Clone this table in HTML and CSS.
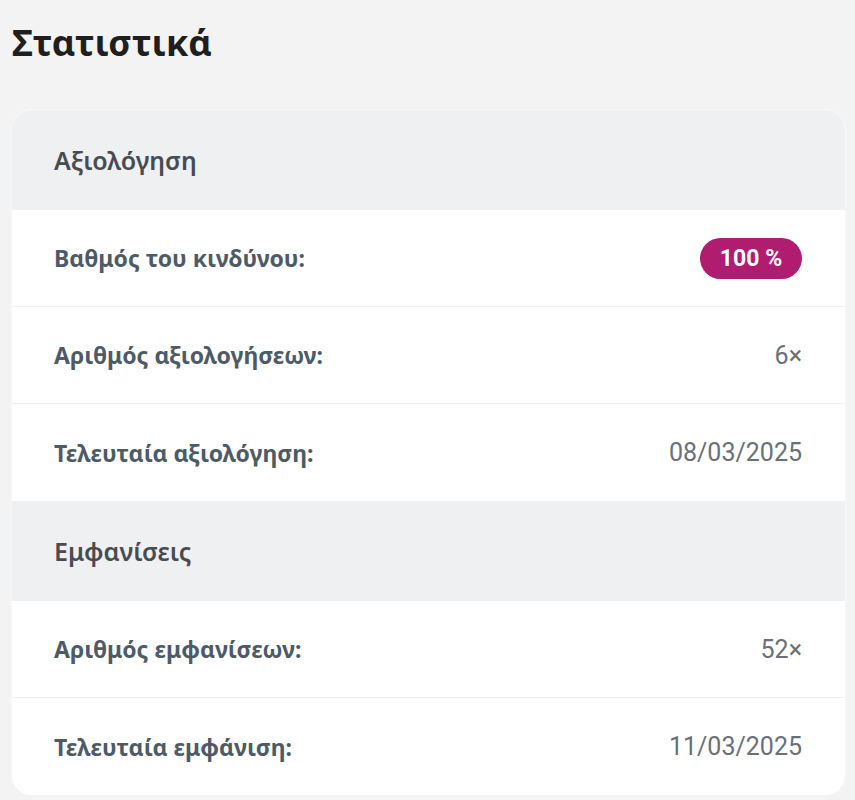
FILE: index.html
```html
<!DOCTYPE html>
<html lang="el">
<head>
<meta charset="utf-8">
<link rel="stylesheet" href="styles.css">
</head>
<body>
<h1 class="title">Στατιστικά</h1>
<div class="card">
  <div class="section-head">Αξιολόγηση</div>
  <div class="row"><span class="label">Βαθμός του κινδύνου:</span><span class="badge">100 %</span></div>
  <div class="row"><span class="label">Αριθμός αξιολογήσεων:</span><span class="value">6×</span></div>
  <div class="row last"><span class="label">Τελευταία αξιολόγηση:</span><span class="value">08/03/2025</span></div>
  <div class="section-head">Εμφανίσεις</div>
  <div class="row"><span class="label">Αριθμός εμφανίσεων:</span><span class="value">52×</span></div>
  <div class="row last"><span class="label">Τελευταία εμφάνιση:</span><span class="value">11/03/2025</span></div>
</div>
</body>
</html>
```
FILE: styles.css
```css
html, body {
  margin: 0;
  padding: 0;
  background: #f3f3f3;
}
body {
  padding: 0 10px 0 12px;
  font-family: "Noto Sans", sans-serif;
}
.title {
  margin: 0;
  padding-top: 18px;
  height: 110px;
  box-sizing: border-box;
  font-size: 36px;
  line-height: 50px;
  font-weight: 700;
  color: #1f1f1f;
}
.card {
  background: #ffffff;
  border-radius: 20px;
  overflow: hidden;
  box-shadow: 0 0 0 1px #f7f7f7, 0 1px 2px rgba(0,0,0,0.03);
}
.section-head {
  background: #eff0f2;
  height: 100px;
  display: flex;
  align-items: center;
  padding: 0 42px;
  font-size: 25px;
  font-weight: 600;
  color: #474c52;
}
.row {
  height: 97px;
  display: flex;
  align-items: center;
  justify-content: space-between;
  padding: 0 43px 0 42px;
  border-bottom: 1px solid #f1f1f1;
  box-sizing: border-box;
}
.row.last {
  border-bottom: none;
}
.label {
  font-size: 23px;
  font-weight: 700;
  color: #4e5b67;
}
.value {
  font-family: Roboto, sans-serif;
  font-size: 25px;
  color: #6b7076;
}
.badge {
  font-family: Roboto, sans-serif;
  font-size: 23px;
  font-weight: 700;
  color: #ffffff;
  background: #b01c6f;
  border-radius: 21px;
  height: 41px;
  width: 102px;
  display: flex;
  align-items: center;
  justify-content: center;
  box-sizing: border-box;
}
```
